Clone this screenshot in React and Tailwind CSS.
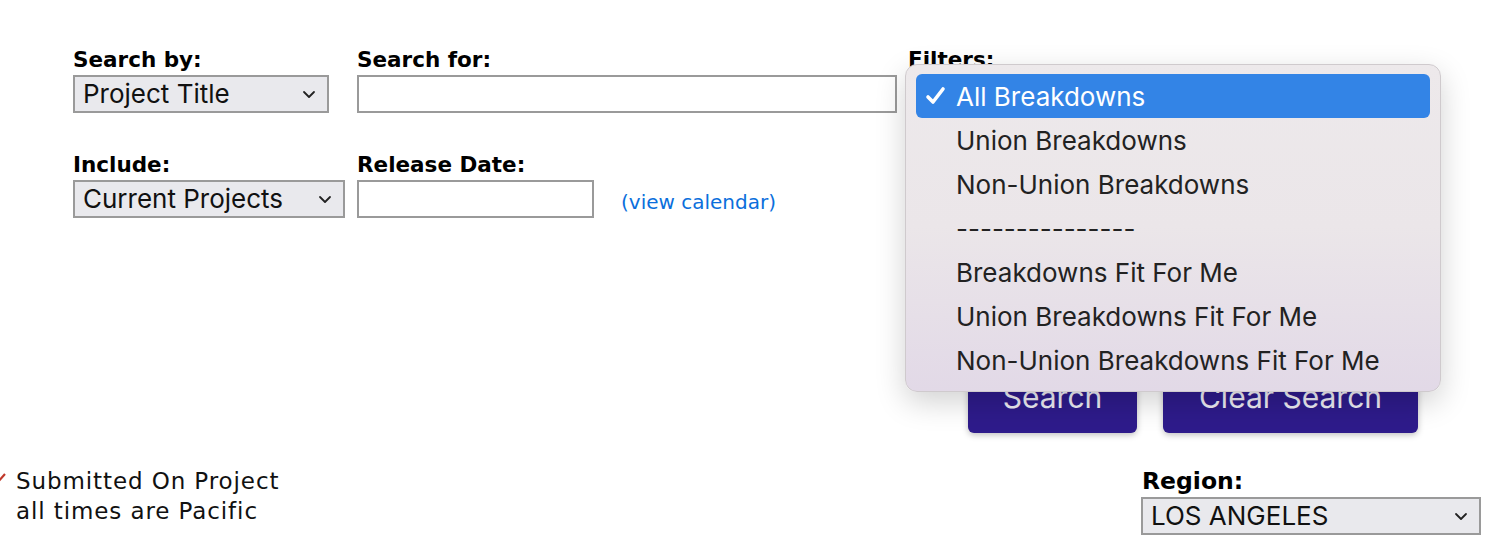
import React from "react";

const Chevron = () => (
  <svg width="14" height="9" viewBox="0 0 14 9" className="shrink-0">
    <polyline points="2,2 7,7 12,2" fill="none" stroke="#222" strokeWidth="1.8" strokeLinecap="round" strokeLinejoin="round" />
  </svg>
);

const Select = ({ value, w }) => (
  <div
    className={`${w} h-[38px] flex items-center justify-between pl-[8px] pr-[11px] bg-[#e9e9ed] border-2 border-[#9a9a9a] text-[26px] text-[#111] leading-none`}
    style={{ fontFamily: "Inter, 'Liberation Sans', sans-serif" }}
  >
    <span>{value}</span>
    <Chevron />
  </div>
);

const Label = ({ children }) => (
  <div className="text-[21.5px] leading-[24px] font-bold text-black mb-[3px]">{children}</div>
);

const items = [
  "Union Breakdowns",
  "Non-Union Breakdowns",
  "---------------",
  "Breakdowns Fit For Me",
  "Union Breakdowns Fit For Me",
  "Non-Union Breakdowns Fit For Me",
];

export default function App() {
  return (
    <div
      className="relative w-[1508px] h-[554px] bg-white overflow-hidden"
      style={{ fontFamily: "'DejaVu Sans', Verdana, sans-serif" }}
    >
      <div className="flex flex-col pt-[48px]">
        <div className="flex pl-[73px]">
          <div className="w-[284px]">
            <Label>Search by:</Label>
            <Select value="Project Title" w="w-[256px]" />
          </div>
          <div className="w-[551px]">
            <Label>Search for:</Label>
            <div className="w-[540px] h-[38px] border-2 border-[#9a9a9a] bg-white" />
          </div>
          <div>
            <Label>Filters:</Label>
          </div>
        </div>

        <div className="flex pl-[73px] mt-[40px]">
          <div className="w-[284px]">
            <Label>Include:</Label>
            <Select value="Current Projects" w="w-[272px]" />
          </div>
          <div className="w-[264px]">
            <Label>Release Date:</Label>
            <div className="w-[237px] h-[38px] border-2 border-[#9a9a9a] bg-white" />
          </div>
          <div className="pt-[39px] text-[20px] text-[#0b6fdc] leading-none">(view calendar)</div>
        </div>

        <div className="flex pl-[968px] gap-[26px] mt-[143px]">
          <button className="w-[169px] h-[72px] rounded-[6px] bg-[#2e1b8b] text-[#ecebf3] text-[30px] shadow-[0_2px_6px_rgba(0,0,0,0.25)]" style={{ fontFamily: "Inter, sans-serif" }}>
            Search
          </button>
          <button className="w-[255px] h-[72px] rounded-[6px] bg-[#2e1b8b] text-[#ecebf3] text-[30px] shadow-[0_2px_6px_rgba(0,0,0,0.25)]" style={{ fontFamily: "Inter, sans-serif" }}>
            Clear Search
          </button>
        </div>

        <div className="flex justify-between mt-[33px]">
          <div className="flex items-start">
            <svg width="16" height="14" viewBox="0 0 16 14" className="-ml-[10px] mt-[6px]">
              <polyline points="2,8 6,12 15,2" fill="none" stroke="#c0392b" strokeWidth="2.2" />
            </svg>
            <div className="text-[23px] leading-[30px] tracking-[0.9px] text-[#111] ml-[10px]">
              <div>Submitted On Project</div>
              <div>all times are Pacific</div>
            </div>
          </div>
          <div className="w-[367px] pt-[2px]">
            <div className="text-[23.5px] leading-[26px] font-bold text-black mb-[3px] pl-[1px]">Region:</div>
            <Select value="LOS ANGELES" w="w-[340px]" />
          </div>
        </div>
      </div>

      {/* Open dropdown menu overlay */}
      <div
        className="absolute left-[905px] top-[64px] w-[536px] h-[328px] rounded-[12px] border border-[#cfcacd] bg-gradient-to-b from-[#ede9eb] via-[#ebe6e9] to-[#e2d9e7] shadow-[0_10px_30px_rgba(0,0,0,0.18)] px-[10px] pt-[9px]"
        style={{ fontFamily: "Inter, 'Noto Sans', sans-serif" }}
      >
        <div className="h-[44px] rounded-[6px] bg-[#3384e6] flex items-center text-white text-[26px]">
          <svg width="22" height="20" viewBox="0 0 22 20" className="ml-[9px] mr-[9px]">
            <polyline points="3,11 8,16 18,3" fill="none" stroke="white" strokeWidth="3.6" strokeLinecap="round" strokeLinejoin="round" />
          </svg>
          <span>All Breakdowns</span>
        </div>
        {items.map((t) => (
          <div key={t} className="h-[44px] flex items-center pl-[40px] text-[26px] text-[#222]">
            {t}
          </div>
        ))}
      </div>
    </div>
  );
}
